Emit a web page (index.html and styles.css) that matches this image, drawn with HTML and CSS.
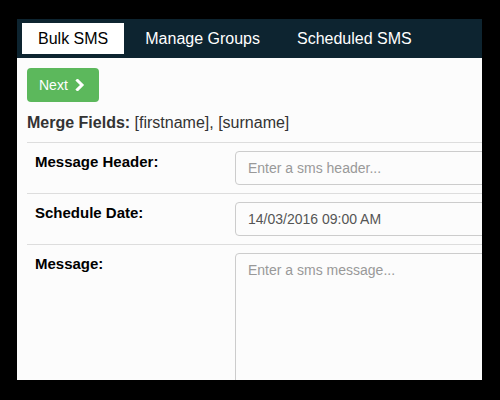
FILE: index.html
```html
<!DOCTYPE html>
<html lang="en">
<head>
  <meta charset="UTF-8" />
  <title>Bulk SMS</title>
  <link rel="stylesheet" href="styles.css">
</head>
<body>

  <div id="panel">
    <ul class="tabs">
      <li class="active">Bulk SMS</li>
      <li>Manage Groups</li>
      <li>Scheduled SMS</li>
    </ul>

    <div class="content">
      <button type="button" class="next">Next
        <svg class="chev" width="10" height="12" viewBox="0 0 10 12">
          <path d="M2.5 1.5 L7 6 L2.5 10.5" fill="none" stroke="#fff" stroke-width="3" stroke-linejoin="miter" stroke-linecap="square"/>
        </svg>
      </button>

      <p class="merge"><b>Merge Fields:</b> [firstname], [surname]</p>

      <table class="form-table">
        <tr>
          <td class="lbl">Message Header:</td>
          <td><input type="text" placeholder="Enter a sms header..."></td>
        </tr>
        <tr>
          <td class="lbl">Schedule Date:</td>
          <td><input type="text" value="14/03/2016 09:00 AM"></td>
        </tr>
        <tr>
          <td class="lbl">Message:</td>
          <td><textarea placeholder="Enter a sms message..."></textarea></td>
        </tr>
      </table>
    </div>
  </div>

</body>
</html>
```

FILE: styles.css
```css
* {
  box-sizing: border-box;
  font-family: 'Liberation Sans', Arial, sans-serif;
}

body {
  margin: 0;
  padding: 19px 18px 20px 17px;
  background: #000;
}

#panel {
  height: 361px;
  background: #fcfcfc;
  overflow: hidden;
}

.tabs {
  list-style: none;
  margin: 0;
  padding: 4px 5px;
  background: #0d2430;
  display: flex;
  gap: 5px;
}

.tabs li {
  padding: 0 16px;
  height: 31px;
  line-height: 31px;
  font-size: 16px;
  color: #fff;
}

.tabs li.active {
  background: #fff;
  color: #000;
}

.content {
  padding: 10px 0 0 10px;
  width: 640px;
}

.next {
  display: flex;
  align-items: center;
  gap: 7px;
  width: 72px;
  height: 34px;
  padding: 0 12px;
  border: none;
  border-radius: 4px;
  background: #5cb85c;
  color: #fff;
  font-size: 14px;
}

.chev {
  display: block;
}

.merge {
  margin: 9px 0 8px;
  font-size: 16px;
  line-height: 23px;
  color: #333;
}

.merge b {
  color: #333;
}

.form-table {
  width: 100%;
  border-collapse: collapse;
}

.form-table td {
  border-top: 1px solid #ddd;
  padding: 8px;
  vertical-align: top;
}

.form-table td.lbl {
  width: 200px;
  font-size: 15px;
  font-weight: bold;
  color: #000;
  line-height: 20px;
  padding-top: 9px;
}

input,
textarea {
  display: block;
  width: 100%;
  height: 34px;
  padding: 6px 12px;
  border: 1px solid #ccc;
  border-radius: 4px;
  background: #fcfcfc;
  font-size: 14px;
  color: #555;
}

textarea {
  height: 180px;
  resize: none;
  line-height: 20px;
}

input::placeholder,
textarea::placeholder {
  color: #999;
}
```
